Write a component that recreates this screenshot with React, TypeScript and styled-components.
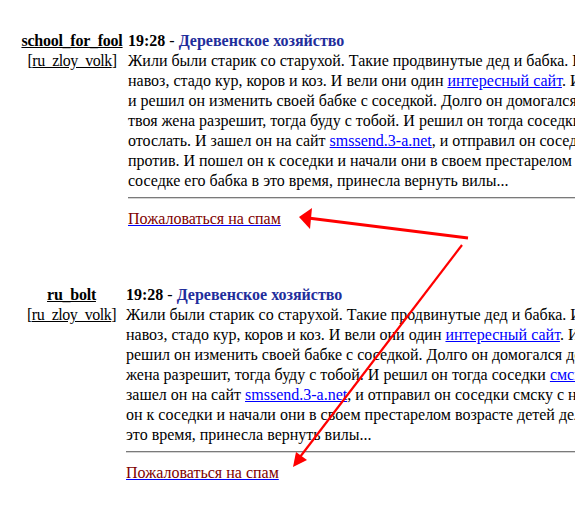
import React, { FC, ReactNode } from 'react';
import styled, { createGlobalStyle } from 'styled-components';

const GlobalStyle = createGlobalStyle`
  html, body {
    margin: 0;
    padding: 0;
    background: #ffffff;
    overflow: hidden;
  }
  body {
    font-family: "Liberation Serif", "Times New Roman", serif;
    font-size: 16px;
    line-height: 20px;
    color: #000000;
  }
`;

const Page = styled.div`
  position: relative;
  width: 575px;
  height: 523px;
  overflow: hidden;
  padding: 31px 0 0 20px;
  box-sizing: border-box;
`;

const Post = styled.div<{ $userWidth: number; $gap: number }>`
  display: grid;
  grid-template-columns: ${({ $userWidth }) => $userWidth}px 900px;
  column-gap: ${({ $gap }) => $gap}px;
  margin-bottom: 56px;
`;

const UserCol = styled.div`
  text-align: center;
  white-space: nowrap;
`;

const UserName = styled.a`
  display: block;
  font-weight: bold;
  color: #000000;
  text-decoration: underline;
  letter-spacing: -0.25px;
`;

const Community = styled.div`
  color: #000000;
  letter-spacing: -0.5px;
  a {
    color: #000000;
    text-decoration: underline;
  }
`;

const Content = styled.div`
  white-space: nowrap;
`;

const Header = styled.div`
  font-weight: bold;
`;

const Dash = styled.span`
  font-weight: normal;
`;

const Title = styled.span`
  color: #1f2e9c;
`;

const Line = styled.div``;

const TextLink = styled.a`
  color: #0000ff;
  text-decoration: underline;
`;

const Rule = styled.hr`
  margin: 6px 0 10px;
  height: 0;
  border: 0;
  border-top: 1px solid #7a7a7a;
  border-bottom: 1px solid #d4d4d4;
`;

const SpamLink = styled.a`
  color: #800000;
  text-decoration: underline;
  text-decoration-color: #0000ff;
`;

const Overlay = styled.svg`
  position: absolute;
  left: 0;
  top: 0;
  pointer-events: none;
`;

interface PostProps {
  user: string;
  userWidth: number;
  gap: number;
  lines: ReactNode[];
}

const PostItem: FC<PostProps> = ({ user, userWidth, gap, lines }) => (
  <Post $userWidth={userWidth} $gap={gap}>
    <UserCol>
      <UserName href="#">{user}</UserName>
      <Community>
        [<a href="#">ru_zloy_volk</a>]
      </Community>
    </UserCol>
    <Content>
      <Header>
        19:28 <Dash>-</Dash> <Title>Деревенское хозяйство</Title>
      </Header>
      {lines.map((line, index) => (
        <Line key={index}>{line}</Line>
      ))}
      <Rule />
      <SpamLink href="#">Пожаловаться на спам</SpamLink>
    </Content>
  </Post>
);

const site = <TextLink href="#">интересный сайт</TextLink>;
const sms = <TextLink href="#">smssend.3-a.net</TextLink>;

const firstLines: ReactNode[] = [
  'Жили были старик со старухой. Такие продвинутые дед и бабка. Нажили они',
  <>навоз, стадо кур, коров и коз. И вели они один {site}. И вот однажды</>,
  'и решил он изменить своей бабке с соседкой. Долго он домогался до соседки',
  'твоя жена разрешит, тогда буду с тобой. И решил он тогда соседки смску',
  <>отослать. И зашел он на сайт {sms}, и отправил он соседки смску</>,
  'против. И пошел он к соседки и начали они в своем престарелом возрасте',
  'соседке его бабка в это время, принесла вернуть вилы...',
];

const secondLines: ReactNode[] = [
  'Жили были старик со старухой. Такие продвинутые дед и бабка. И нажили',
  <>навоз, стадо кур, коров и коз. И вели они один {site}. И вот однажды</>,
  'решил он изменить своей бабке с соседкой. Долго он домогался до соседки',
  <>жена разрешит, тогда буду с тобой. И решил он тогда соседки <TextLink href="#">смску</TextLink></>,
  <>зашел он на сайт {sms}, и отправил он соседки смску с номера</>,
  'он к соседки и начали они в своем престарелом возрасте детей делать',
  'это время, принесла вернуть вилы...',
];

const App: FC = () => (
  <>
    <GlobalStyle />
    <Page>
      <PostItem user="school_for_fool" userWidth={104} gap={4} lines={firstLines} />
      <PostItem user="ru_bolt" userWidth={103} gap={3} lines={secondLines} />
      <Overlay width={575} height={523} viewBox="0 0 575 523">
        <line x1={468} y1={238} x2={308} y2={218} stroke="#ff0000" strokeWidth={3} />
        <polygon points="299,217 312,208 310,229" fill="#ff0000" />
        <line x1={462} y1={245} x2={300} y2={457} stroke="#ff0000" strokeWidth={2.2} />
        <polygon points="293,467 296,452 307,460" fill="#ff0000" />
      </Overlay>
    </Page>
  </>
);

export default App;
